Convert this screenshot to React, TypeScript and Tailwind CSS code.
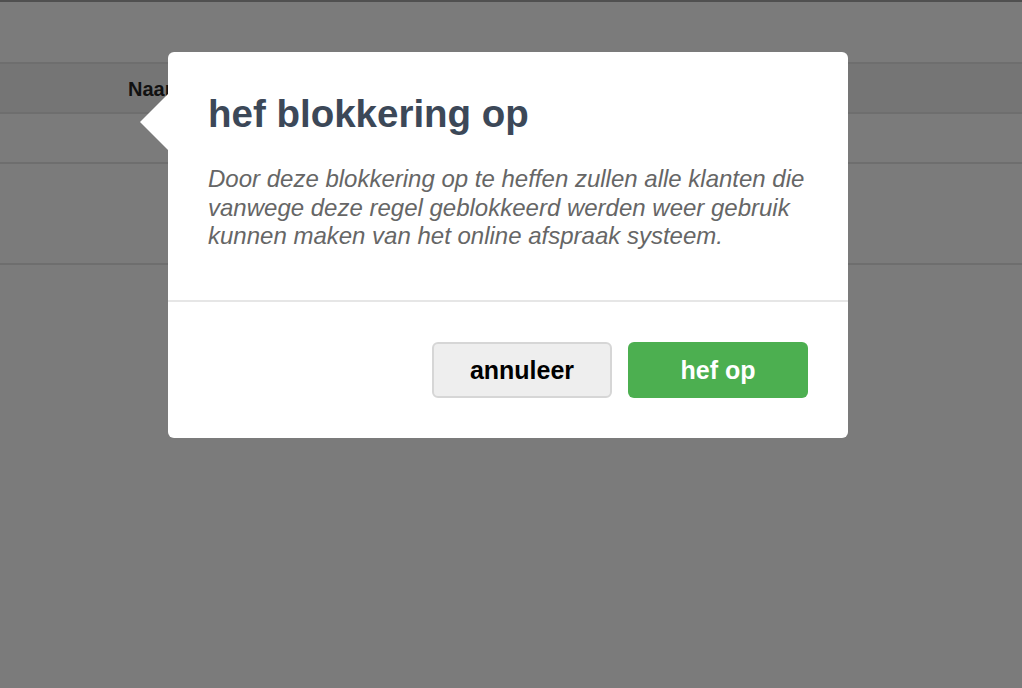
// Bevestigingsdialoog "hef blokkering op" boven een gedimde tabel
function TableBackdrop() {
  return (
    <div className="flex flex-col">
      <div className="h-[2px] bg-[#505050]" />
      <div className="h-[60px]" />
      <div className="h-[2px] bg-[#6e6e6e]" />
      <div className="flex h-[48px] items-center bg-[#757575] pl-[128px]">
        <span className="pt-[2px] text-[20px] font-bold text-[#111]">Naam</span>
      </div>
      <div className="h-[2px] bg-[#6e6e6e]" />
      <div className="h-[48px]" />
      <div className="h-[2px] bg-[#6e6e6e]" />
      <div className="h-[99px]" />
      <div className="h-[2px] bg-[#6e6e6e]" />
    </div>
  );
}

export default function App() {
  return (
    <div className="relative h-[688px] w-full overflow-hidden bg-[#7b7b7b] font-['Liberation_Sans',Arial,sans-serif]">
      <TableBackdrop />

      <div className="absolute left-[168px] top-[52px] w-[680px] rounded-[6px] bg-white">
        {/* pijltje naar de rij */}
        <div className="absolute left-[-28px] top-[42px] h-0 w-0 border-y-[28px] border-r-[28px] border-y-transparent border-r-white" />

        <div className="px-[40px] pb-[49px] pt-[40px]">
          <h2 className="text-[38.5px] font-bold leading-[44px] text-[#3c4858]">hef blokkering op</h2>
          <p className="mt-[29px] text-[24px] italic leading-[28.5px] text-[#666]">
            Door deze blokkering op te heffen zullen alle klanten die vanwege deze regel geblokkeerd werden weer
            gebruik kunnen maken van het online afspraak systeem.
          </p>
        </div>

        <div className="h-[2px] bg-[#e6e6e6]" />

        <div className="flex justify-end gap-[16px] px-[40px] pb-[40px] pt-[40px]">
          <button className="h-[56px] w-[180px] rounded-[6px] border-2 border-[#d6d6d6] bg-[#eeeeee] pt-[3px] text-[25px] font-bold text-black">
            annuleer
          </button>
          <button className="h-[56px] w-[180px] rounded-[6px] bg-[#4caf50] pt-[3px] text-[25px] font-bold text-white">
            hef op
          </button>
        </div>
      </div>
    </div>
  );
}
